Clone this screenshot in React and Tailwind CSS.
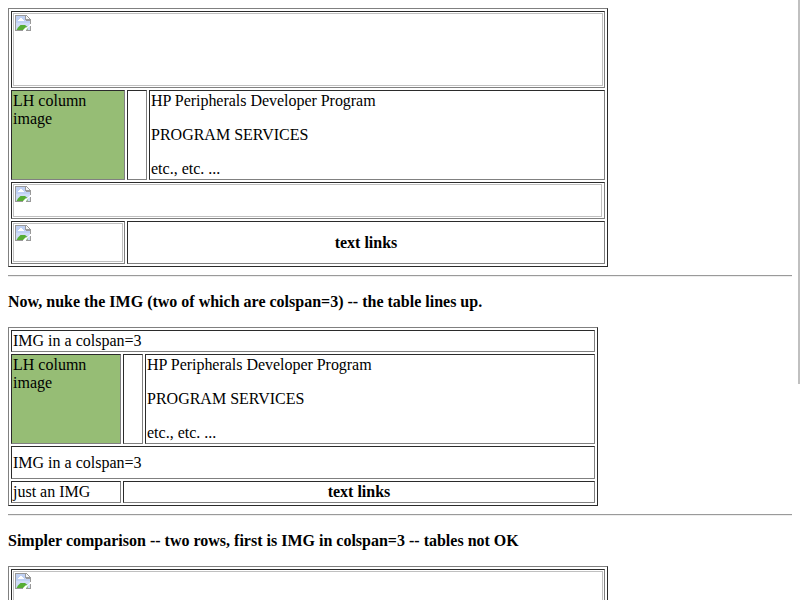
const RAISED = 'border border-t-[#808080] border-l-[#808080] border-b-[#2b2b2b] border-r-[#2b2b2b]';
const SUNKEN = 'border border-t-[#2b2b2b] border-l-[#2b2b2b] border-b-[#808080] border-r-[#808080]';

function BrokenImage({ className }) {
  return (
    <div className={`border border-[#c0c0c0] p-px ${className}`}>
      <svg width="16" height="16" viewBox="0 0 16 16" className="block">
        <path d="M1 1h10v4h4v10H1z" fill="#c0d1f4" />
        <path d="M1 8h14v7H1z" fill="#cfdcf7" />
        <path d="M3 6V5h1V4h1V3h2v1h1v1h1v1z" fill="#fff" />
        <path d="M1.5 15L3 12.5 5.5 10H10l2.5 2V15z" fill="#56ad35" />
        <path d="M8 16v-1l2.5-2.5 2-.5L16 8.5V11h-1l-2 1.5-2 3V16z" fill="#fff" />
        <path d="M11 1l4 4h-4z" fill="#f4f4f4" />
        <path d="M0 0h12v1H1v14h7v1H0z" fill="#999" />
        <path d="M11 0h1v1h1v1h1v1h1v1h1v5h-1V6h-4V5h-1V1h1v3h3V3h-1V2h-1V1h-1z" fill="#999" />
        <path d="M15 11h1v5h-5v-1h4z" fill="#999" />
      </svg>
    </div>
  );
}

function Cell({ className = '', children }) {
  return <div className={`${SUNKEN} p-px ${className}`}>{children}</div>;
}

function Table({ className, children }) {
  return <div className={`${RAISED} flex flex-col gap-[2px] p-[2px] ${className}`}>{children}</div>;
}

function ProgramRow({ leftWidth }) {
  return (
    <div className="flex h-[90px] gap-[2px]">
      <Cell className={`${leftWidth} shrink-0 bg-[#96bd75]`}>
        LH column
        <br />
        image
      </Cell>
      <Cell className="w-[20px] shrink-0" />
      <Cell className="flex flex-1 flex-col gap-4">
        <p className="tracking-[-0.03px]">HP Peripherals Developer Program</p>
        <p>PROGRAM SERVICES</p>
        <p>etc., etc. ...</p>
      </Cell>
    </div>
  );
}

function Rule() {
  return <div className="mt-2 h-[2px] border-t border-t-[#9a9a9a] border-b border-b-[#eeeeee]" />;
}

export default function App() {
  return (
    <div className="flex h-[600px] w-[800px] overflow-hidden bg-white font-['Liberation_Serif',serif] text-[16px] leading-[18px] text-black">
      <main className="ml-2 w-[784px] shrink-0 pt-2 whitespace-nowrap">
        <Table className="h-[259px] w-[600px]">
          <Cell className="h-[77px]"><BrokenImage className="h-[73px] w-[590px]" /></Cell>
          <ProgramRow leftWidth="w-[114px]" />
          <Cell className="h-[37px]"><BrokenImage className="h-[33px] w-[589px]" /></Cell>
          <div className="flex h-[43px] gap-[2px]">
            <Cell className="w-[114px] shrink-0"><BrokenImage className="h-[39px] w-[110px]" /></Cell>
            <Cell className="flex flex-1 items-center justify-center font-bold">text links</Cell>
          </div>
        </Table>
        <Rule />
        <h4 className="mt-4 font-bold">Now, nuke the IMG (two of which are colspan=3) -- the table lines up.</h4>
        <Table className="mt-4 h-[179px] w-[590px]">
          <Cell className="h-[22px]">IMG in a colspan=3</Cell>
          <ProgramRow leftWidth="w-[110px]" />
          <Cell className="flex h-[33px] items-center">IMG in a colspan=3</Cell>
          <div className="flex h-[22px] gap-[2px]">
            <Cell className="w-[110px] shrink-0">just an IMG</Cell>
            <Cell className="flex-1 text-center font-bold">text links</Cell>
          </div>
        </Table>
        <Rule />
        <h4 className="mt-4 font-bold">Simpler comparison -- two rows, first is IMG in colspan=3 -- tables not OK</h4>
        <Table className="mt-4 h-[259px] w-[600px]">
          <Cell className="h-[77px]"><BrokenImage className="h-[73px] w-[590px]" /></Cell>
        </Table>
      </main>
      <div className="ml-auto h-[384px] w-[2px] bg-[#c0c0c0]" />
    </div>
  );
}
